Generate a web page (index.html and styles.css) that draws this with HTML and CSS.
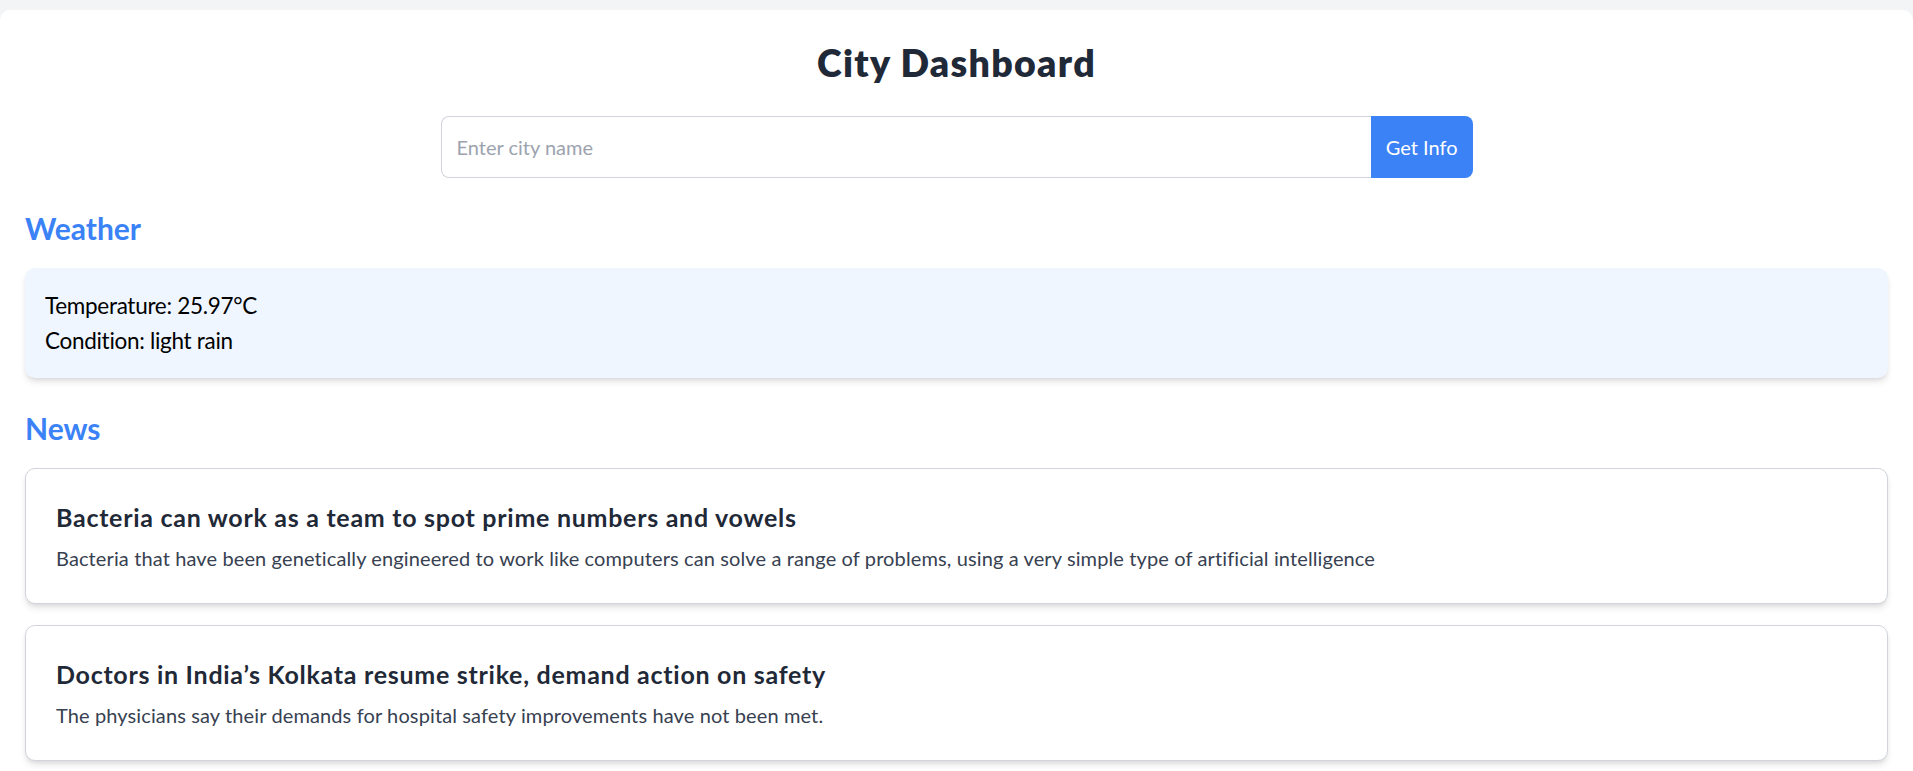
FILE: index.html
```html
<!DOCTYPE html>
<html lang="en">
<head>
<meta charset="utf-8">
<title>City Dashboard</title>
<link rel="stylesheet" href="styles.css">
</head>
<body>
<div class="page">
  <h1 class="title">City Dashboard</h1>
  <form class="search">
    <input class="search-input" type="text" placeholder="Enter city name">
    <button class="search-btn" type="button">Get Info</button>
  </form>

  <section class="section">
    <h2 class="section-title">Weather</h2>
    <div class="weather-card">
      <p class="weather-line">Temperature: 25.97°C</p>
      <p class="weather-line">Condition: light rain</p>
    </div>
  </section>

  <section class="section">
    <h2 class="section-title">News</h2>
    <div class="news-list">
      <article class="news-card">
        <h3 class="news-title">Bacteria can work as a team to spot prime numbers and vowels</h3>
        <p class="news-desc">Bacteria that have been genetically engineered to work like computers can solve a range of problems, using a very simple type of artificial intelligence</p>
      </article>
      <article class="news-card">
        <h3 class="news-title">Doctors in India’s Kolkata resume strike, demand action on safety</h3>
        <p class="news-desc">The physicians say their demands for hospital safety improvements have not been met.</p>
      </article>
    </div>
  </section>
</div>
</body>
</html>
```

FILE: styles.css
```css
* { box-sizing: border-box; }

html, body {
  margin: 0;
  padding: 0;
}

body {
  background: #f3f4f6;
  padding-top: 10px;
  font-family: Lato, "Open Sans", "Noto Sans", sans-serif;
  color: #111827;
}

.page {
  background: #ffffff;
  border-radius: 10px;
  padding: 30px 25px 25px;
  min-height: 900px;
}

.title {
  margin: 0 0 31px;
  text-align: center;
  font-size: 37.5px;
  line-height: 45px;
  font-weight: 800;
  letter-spacing: 1.3px;
  color: #1f2937;
}

.search {
  display: flex;
  width: 1032px;
  margin: 0 auto 30px;
}

.search-input {
  flex: 1;
  height: 62px;
  padding: 0 15px;
  border: 1px solid #d1d5db;
  border-right: none;
  border-radius: 8px 0 0 8px;
  font-family: inherit;
  font-size: 20px;
  color: #111827;
  outline: none;
}

.search-input::placeholder {
  color: #9ca3af;
}

.search-btn {
  height: 62px;
  padding: 0 15px;
  border: none;
  border-radius: 0 8px 8px 0;
  background: #3b82f6;
  color: #ffffff;
  font-family: inherit;
  font-size: 20px;
  cursor: pointer;
}

.section {
  margin-bottom: 30px;
}

.section-title {
  margin: 0 0 20px;
  font-size: 30px;
  line-height: 40px;
  font-weight: 700;
  color: #3b82f6;
}

.weather-card {
  background: #eff6ff;
  border-radius: 10px;
  padding: 20px;
  box-shadow: 0 5px 7.5px -1.25px rgba(0,0,0,0.1), 0 2.5px 5px -2.5px rgba(0,0,0,0.1);
}

.weather-line {
  margin: 0;
  font-size: 22.5px;
  line-height: 35px;
  letter-spacing: -0.3px;
  color: #000000;
}

.news-list {
  display: flex;
  flex-direction: column;
  gap: 21px;
}

.news-card {
  background: #ffffff;
  border: 1px solid #d1d5db;
  border-radius: 10px;
  padding: 31px 30px 30px;
  box-shadow: 0 5px 7.5px -1.25px rgba(0,0,0,0.1), 0 2.5px 5px -2.5px rgba(0,0,0,0.1);
}

.news-title {
  margin: 0 0 8px;
  font-size: 25px;
  line-height: 35px;
  font-weight: 700;
  letter-spacing: 0.72px;
  color: #1f2937;
}

.news-desc {
  margin: 0;
  font-size: 20px;
  line-height: 30px;
  letter-spacing: 0.12px;
  color: #374151;
}
```
